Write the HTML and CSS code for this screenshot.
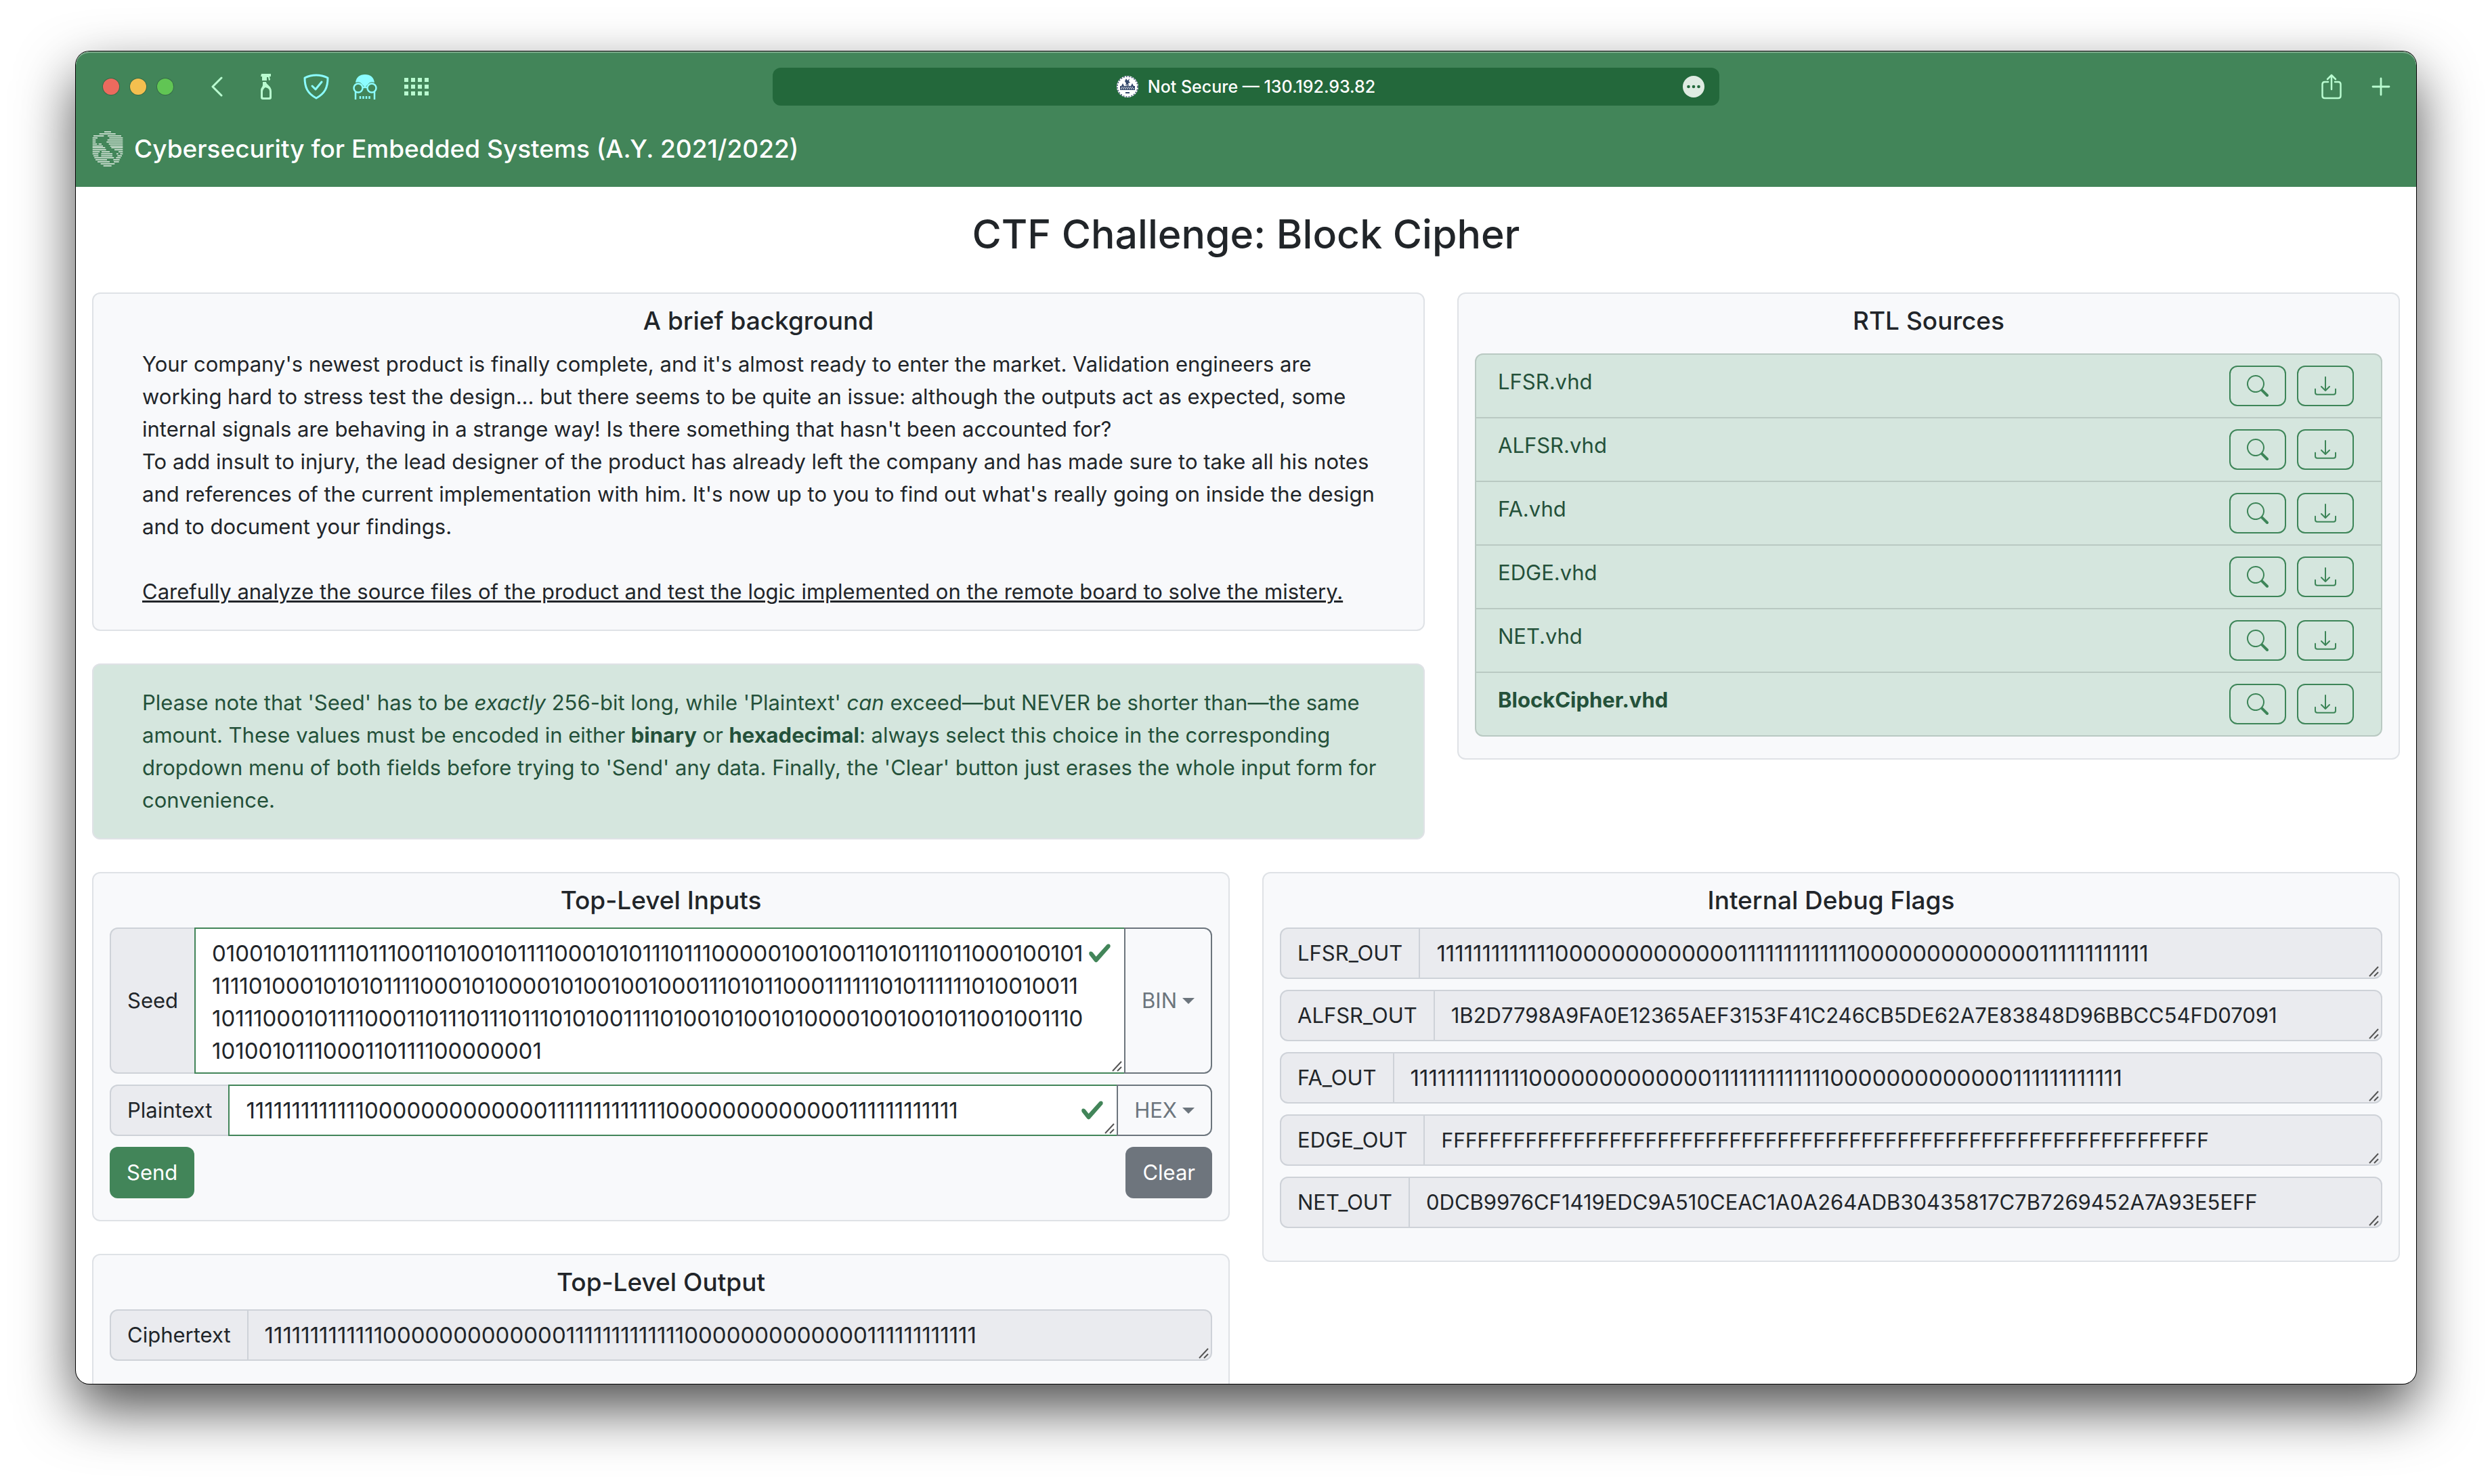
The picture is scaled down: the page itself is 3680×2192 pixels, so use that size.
FILE: index.html
```html
<!DOCTYPE html>
<html lang="en">
<head>
<meta charset="utf-8">
<title>CTF Challenge: Block Cipher</title>
<link rel="stylesheet" href="styles.css">
</head>
<body>
<svg class="sprite" aria-hidden="true">
  <symbol id="search" viewBox="0 0 16 16"><path d="M11.742 10.344a6.5 6.5 0 1 0-1.397 1.398h-.001c.03.04.062.078.098.115l3.85 3.85a1 1 0 0 0 1.415-1.414l-3.85-3.85a1.007 1.007 0 0 0-.115-.1zM12 6.5a5.5 5.5 0 1 1-11 0 5.5 5.5 0 0 1 11 0z"/></symbol>
  <symbol id="download" viewBox="0 0 16 16"><path d="M.5 9.900a.5.5 0 0 1 .5.5v2.500a1 1 0 0 0 1 1h12a1 1 0 0 0 1-1v-2.500a.5.5 0 0 1 1 0v2.500a2 2 0 0 1-2 2H2a2 2 0 0 1-2-2v-2.500a.5.5 0 0 1 .5-.5z"/><path d="M7.646 11.854a.5.5 0 0 0 .708 0l3-3a.5.5 0 0 0-.708-.708L8.500 10.293V1.500a.5.5 0 0 0-1 0v8.793L5.354 8.146a.5.5 0 1 0-.708.708l3 3z"/></symbol>
</svg>
<div class="window">
  <header class="chrome">
    <div class="toolbar">
      <div class="tools">
        <div class="lights"><span class="light red"></span><span class="light yellow"></span><span class="light green"></span></div>
        <button class="tool back" type="button" aria-label="Back"><svg width="18" height="30" viewBox="0 0 18 30" fill="none" stroke="currentColor" stroke-width="3" stroke-linecap="round" stroke-linejoin="round"><path d="M15 2 2 15l13 13"/></svg></button>
        <button class="tool spray" type="button" aria-label="Cleaner"><svg width="18" height="38" viewBox="0 0 18 38" fill="currentColor"><path d="M2 0h14v4h-2l1 5-2 1-1-5-2 0v2H3V4H1z"/><path d="M3 7h7v3H3z"/><path fill-rule="evenodd" d="M4 12h5c0 4 8 6 8 14v9q0 3-3 3H4q-3 0-3-3V25c0-5 3-5 3-9zM8 20c-3 2-4 4-4 7v7q0 1 1 1h8q1 0 1-1v-8c0-4-3-5-6-6z"/></svg></button>
        <button class="tool shield" type="button" aria-label="Privacy shield"><svg width="38" height="38" viewBox="0 0 38 38" fill="none" stroke="currentColor" stroke-width="3" stroke-linecap="round" stroke-linejoin="round"><path d="M19 2c6 0 11 1 17 4 0 14-4 23-17 30C6 29 2 20 2 6 8 3 13 2 19 2z"/><path d="m13 18 5 5 9-11"/></svg></button>
        <button class="tool agent" type="button" aria-label="Private mode"><svg width="36" height="38" viewBox="0 0 36 38" fill="none" stroke="currentColor" stroke-width="2.500"><path d="M4 13C5 5 10 1 18 1s13 4 14 12c-5-2-8 0-10 3l-4 4-4-4c-2-3-5-5-10-3z" fill="currentColor" stroke="none"/><circle cx="8" cy="21" r="6.500"/><circle cx="28" cy="21" r="6.500"/><path d="M14 20h8M4 27v11M32 27v11"/><path d="M11 33v4M15.500 33v4M20 33v4M24.500 33v4"/></svg></button>
        <button class="tool apps" type="button" aria-label="Top sites"><svg width="38" height="28" viewBox="0 0 38 28" fill="none" stroke="currentColor" stroke-width="6" stroke-dasharray="6 4"><path d="M1 4h36M1 14h36M1 24h36"/></svg></button>
      </div>
      <div class="address">
        <svg width="32" height="32" viewBox="0 0 32 32"><circle cx="16" cy="16" r="16" fill="#fff"/><circle cx="16" cy="16" r="15" fill="none" stroke="#34486c" stroke-width="1.500" stroke-dasharray="2 2"/><path d="M5 15h2l2-4 2 4h2l3-1 3 1h2l2-4 2 4h2v6H5z" fill="#34486c"/><path d="m14 4 2 3 3-3-1 4 2 2-3 1 1 3-3-1-2 1 1-3-2-3z" fill="#34486c"/><path d="M7 17h18M6 19h20" stroke="#fff" stroke-dasharray="2 1"/><path d="M13 25h6" stroke="#34486c" stroke-width="2"/></svg>
        <span>Not Secure — 130.192.93.82</span>
        <button class="more" type="button" aria-label="Page settings"><svg width="32" height="32" viewBox="0 0 32 32"><circle cx="16" cy="16" r="16" fill="#dfebe2"/><g fill="#23683b"><circle cx="8.500" cy="16" r="2.300"/><circle cx="16" cy="16" r="2.300"/><circle cx="23.500" cy="16" r="2.300"/></g></svg></button>
      </div>
      <div class="actions">
        <button class="tool" type="button" aria-label="Share"><svg width="30" height="38" viewBox="0 0 30 38" fill="none" stroke="currentColor" stroke-width="2.500" stroke-linecap="round" stroke-linejoin="round"><path d="M10 12H5q-3.500 0-3.500 3.500v17Q1.500 36 5 36h20q3.500 0 3.500-3.500v-17Q28.500 12 25 12h-5M15 23V2M9 8l6-6 6 6"/></svg></button>
        <button class="tool" type="button" aria-label="New tab"><svg width="28" height="28" viewBox="0 0 28 28" fill="none" stroke="currentColor" stroke-width="2.800" stroke-linecap="round"><path d="M14 2v24M2 14h24"/></svg></button>
      </div>
    </div>
    <a class="brand" href="#">
      <svg width="46" height="54" viewBox="28 28 138 160" fill="none" stroke="#e6f0e8" stroke-width="4.500"><path d="M82 32h30M60 41h72M34 50h46M97 50h60M30 59h22M104 59h60M30 68h14M96 68h68M30 77h14M92 77h72M30 86h20M57 86h13M102 86h62M30 95h46M108 95h56M30 103h56M113 103h51M30 112h60M127 112h37M30 121h32M70 121h36M145 121h19M30 130h26M68 130h50M136 130h8M152 130h12M34 139h22M68 139h50M140 139h20M38 147h87M134 147h21M43 156h51M122 156h28M52 165h54M124 165h23M66 174h62M78 183h36"/></svg>
      Cybersecurity for Embedded Systems (A.Y. 2021/2022)
    </a>
  </header>
  <main>
    <h1>CTF Challenge: Block Cipher</h1>
    <div class="grid">
      <div class="stack wide">
        <section class="card">
          <h2>A brief background</h2>
          <p>Your company's newest product is finally complete, and it's almost ready to enter the market. Validation engineers are working hard to stress test the design... but there seems to be quite an issue: although the outputs act as expected, some internal signals are behaving in a strange way! Is there something that hasn't been accounted for?<br>To add insult to injury, the lead designer of the product has already left the company and has made sure to take all his notes and references of the current implementation with him. It's now up to you to find out what's really going on inside the design and to document your findings.<br><br><u>Carefully analyze the source files of the product and test the logic implemented on the remote board to solve the mistery.</u></p>
        </section>
        <section class="card note">
          <p>Please note that 'Seed' has to be <em>exactly</em> 256-bit long, while 'Plaintext' <em>can</em> exceed—but NEVER be shorter than—the same amount. These values must be encoded in either <strong>binary</strong> or <strong>hexadecimal</strong>: always select this choice in the corresponding dropdown menu of both fields before trying to 'Send' any data. Finally, the 'Clear' button just erases the whole input form for convenience.</p>
        </section>
      </div>
      <div class="stack narrow">
        <section class="card">
          <h2>RTL Sources</h2>
          <ul class="sources">
            <li><span>LFSR.vhd</span><button type="button" aria-label="View LFSR.vhd"><svg><use href="#search"/></svg></button><button type="button" aria-label="Download LFSR.vhd"><svg><use href="#download"/></svg></button></li>
            <li><span>ALFSR.vhd</span><button type="button" aria-label="View ALFSR.vhd"><svg><use href="#search"/></svg></button><button type="button" aria-label="Download ALFSR.vhd"><svg><use href="#download"/></svg></button></li>
            <li><span>FA.vhd</span><button type="button" aria-label="View FA.vhd"><svg><use href="#search"/></svg></button><button type="button" aria-label="Download FA.vhd"><svg><use href="#download"/></svg></button></li>
            <li><span>EDGE.vhd</span><button type="button" aria-label="View EDGE.vhd"><svg><use href="#search"/></svg></button><button type="button" aria-label="Download EDGE.vhd"><svg><use href="#download"/></svg></button></li>
            <li><span>NET.vhd</span><button type="button" aria-label="View NET.vhd"><svg><use href="#search"/></svg></button><button type="button" aria-label="Download NET.vhd"><svg><use href="#download"/></svg></button></li>
            <li><span><strong>BlockCipher.vhd</strong></span><button type="button" aria-label="View BlockCipher.vhd"><svg><use href="#search"/></svg></button><button type="button" aria-label="Download BlockCipher.vhd"><svg><use href="#download"/></svg></button></li>
          </ul>
        </section>
      </div>
      <div class="stack half">
        <form class="card">
          <h2>Top-Level Inputs</h2>
          <div class="group">
            <label for="seed">Seed</label>
            <textarea id="seed" class="digits valid seed" rows="4" spellcheck="false">0100101011111011100110100101111000101011101110000010010011010111011000100101
1111010001010101111000101000010100100100011101011000111111010111111010010011
1011100010111100011011101110111010100111101001010010100001001001011001001110
1010010111000110111100000001</textarea>
            <select aria-label="Seed encoding"><option>BIN</option><option>HEX</option></select>
          </div>
          <div class="group">
            <label for="plaintext">Plaintext</label>
            <textarea id="plaintext" class="digits valid" rows="1" spellcheck="false">1111111111111000000000000011111111111110000000000000111111111111</textarea>
            <select aria-label="Plaintext encoding"><option>HEX</option><option>BIN</option></select>
          </div>
          <div class="buttons">
            <button class="btn send" type="button">Send</button>
            <button class="btn clear" type="reset">Clear</button>
          </div>
        </form>
        <section class="card">
          <h2>Top-Level Output</h2>
          <div class="group">
            <label for="ciphertext">Ciphertext</label>
            <textarea id="ciphertext" class="digits" rows="1" readonly>1111111111111000000000000011111111111110000000000000111111111111</textarea>
          </div>
        </section>
      </div>
      <div class="stack half">
        <section class="card">
          <h2>Internal Debug Flags</h2>
          <div class="group"><label for="lfsr">LFSR_OUT</label><textarea id="lfsr" class="digits" rows="1" readonly>1111111111111000000000000011111111111110000000000000111111111111</textarea></div>
          <div class="group"><label for="alfsr">ALFSR_OUT</label><textarea id="alfsr" rows="1" readonly>1B2D7798A9FA0E12365AEF3153F41C246CB5DE62A7E83848D96BBCC54FD07091</textarea></div>
          <div class="group"><label for="fa">FA_OUT</label><textarea id="fa" class="digits" rows="1" readonly>1111111111111000000000000011111111111110000000000000111111111111</textarea></div>
          <div class="group"><label for="edge">EDGE_OUT</label><textarea id="edge" class="letters" rows="1" readonly>FFFFFFFFFFFFFFFFFFFFFFFFFFFFFFFFFFFFFFFFFFFFFFFFFFFFFFFFFFFFFFFF</textarea></div>
          <div class="group"><label for="net">NET_OUT</label><textarea id="net" rows="1" readonly>0DCB9976CF1419EDC9A510CEAC1A0A264ADB30435817C7B7269452A7A93E5EFF</textarea></div>
        </section>
      </div>
    </div>
  </main>
</div>
</body>
</html>
```
FILE: styles.css
```css
* { box-sizing: border-box; }

body {
  display: flex;
  height: 100vh;
  margin: 0;
  padding: 76px 112px 148px;
  background: #fff;
  color: #212529;
  font: 400 31px/48px Inter, "Liberation Sans", sans-serif;
}

button, select, textarea { margin: 0; font: inherit; }
h1, h2, p, ul { margin: 0; }

.sprite { position: absolute; width: 0; height: 0; }

.window {
  flex: 1;
  min-width: 0;
  overflow: hidden;
  border-radius: 20px;
  background: #fff;
  box-shadow: 0 0 0 1px #000, 0 36px 84px rgba(0, 0, 0, .7);
}

/* Browser chrome */
.chrome {
  border-radius: 20px 20px 0 0;
  background: #428559;
  box-shadow: inset 0 2px 1px #82ae90;
}

.toolbar {
  display: grid;
  grid-template-columns: 1fr minmax(0, 1398px) 1fr;
  align-items: center;
  height: 104px;
  padding: 0 38px;
}

.tools, .actions { display: flex; align-items: center; }
.actions { justify-content: flex-end; gap: 44px; }

.lights { display: flex; gap: 16px; margin: 0 56px 0 2px; }
.light { width: 24px; height: 24px; border-radius: 50%; box-shadow: 0 0 0 1px rgba(0, 0, 0, .2); }
.red { background: #ec6a5e; }
.yellow { background: #f4bf4f; }
.green { background: #61c554; }

.tool { display: flex; padding: 0; border: 0; background: none; color: #b9fbd0; }
.spray { margin-left: 54px; }
.shield { margin-left: 46px; color: #8cfcff; }
.agent { margin-left: 35px; color: #8cfcff; }
.apps { margin-left: 39px; }

.address {
  display: flex;
  justify-content: center;
  align-items: center;
  gap: 14px;
  position: relative;
  height: 56px;
  border-radius: 12px;
  background: #23683b;
  color: #fff;
  font-size: 25px;
  font-weight: 500;
}
.more { display: flex; position: absolute; right: 22px; padding: 0; border: 0; background: none; }

.brand {
  display: flex;
  align-items: center;
  gap: 16px;
  height: 96px;
  padding: 0 24px 16px;
  color: #fff;
  font-size: 37px;
  font-weight: 500;
  text-decoration: none;
}

/* Page */
main { padding: 32px 24px; }

h1 {
  margin-bottom: 48px;
  font-size: 59px;
  font-weight: 500;
  line-height: 76px;
  text-align: center;
}

h2 {
  margin-bottom: 16px;
  font-size: 37px;
  font-weight: 500;
  line-height: 48px;
  text-align: center;
}

.grid {
  display: grid;
  grid-template-columns: repeat(12, minmax(0, 1fr));
  gap: 48px;
  align-items: start;
}
.stack { display: grid; grid-template-columns: minmax(0, 1fr); gap: 48px; }
.wide { grid-column: span 7; }
.narrow { grid-column: span 5; }
.half { grid-column: span 6; }

.card {
  padding: 16px 24px 32px;
  border: 2px solid #dfe2e6;
  border-radius: 12px;
  background: #f8f9fb;
}
.card p { padding: 0 24px 0 48px; }
.note { padding-top: 32px; background: #d5e6de; color: #24513a; }

.sources {
  margin-top: 24px;
  padding: 0;
  border: 2px solid #b9c9c2;
  border-radius: 12px;
  background: #d5e6de;
  color: #24513a;
  list-style: none;
}
.sources li { display: flex; gap: 16px; padding: 16px 40px 16px 32px; }
.sources li + li { border-top: 2px solid #b9c9c2; }
.sources span { flex: 1; }
.sources button {
  display: grid;
  place-items: center;
  width: 84px;
  height: 60px;
  padding: 0;
  border: 2px solid #3d8558;
  border-radius: 12px;
  background: none;
}
.sources svg { width: 32px; height: 32px; fill: #3d8558; }

/* Forms */
.group { display: flex; margin-bottom: 16px; }

label {
  display: flex;
  align-items: center;
  padding: 0 24px;
  border: 2px solid #ced2d8;
  border-radius: 12px 0 0 12px;
  background: #eaebef;
}

textarea {
  flex: 1;
  min-width: 0;
  height: 76px;
  margin-left: -2px;
  padding: 12px 24px;
  overflow: hidden;
  border: 2px solid #ced2d8;
  border-radius: 0 12px 12px 0;
  outline: 0;
  background: #eaebef url("data:image/svg+xml,%3Csvg xmlns='http://www.w3.org/2000/svg' width='16' height='16' stroke='%23555' stroke-width='2'%3E%3Cpath d='M1 15 14 1M8 15l6-6'/%3E%3C/svg%3E") no-repeat right 2px bottom 1px;
  color: inherit;
  resize: none;
  white-space: pre;
}
.digits { font-size: 33px; }
.letters { font-size: 30px; }

.valid {
  padding-right: 54px;
  border-color: #428559;
  border-radius: 0;
  background-color: #fff;
  background-image: url("data:image/svg+xml,%3Csvg xmlns='http://www.w3.org/2000/svg' width='16' height='16' stroke='%23555' stroke-width='2'%3E%3Cpath d='M1 15 14 1M8 15l6-6'/%3E%3C/svg%3E"), url("data:image/svg+xml,%3Csvg xmlns='http://www.w3.org/2000/svg' viewBox='0 0 8 8'%3E%3Cpath fill='%23428559' d='M2.300 6.730.6 4.530c-.4-1.040.46-1.400 1.100-.8l1.100 1.400 3.400-3.800c.6-.63 1.600-.27 1.200.7l-4 4.600c-.43.5-.8.4-1.100.1z'/%3E%3C/svg%3E");
  background-position: right 2px bottom 1px, right 18px top 18px;
  background-size: 16px, 36px;
}
.seed { height: 216px; }

select {
  appearance: none;
  margin-left: -2px;
  padding: 0 50px 0 24px;
  border: 2px solid #6c757d;
  border-radius: 0 12px 12px 0;
  background: #f8f9fb url("data:image/svg+xml,%3Csvg xmlns='http://www.w3.org/2000/svg' width='18' height='9' fill='%236c757d'%3E%3Cpath d='M0 0h18L9 9z'/%3E%3C/svg%3E") no-repeat right 24px center;
  color: #6c757d;
  field-sizing: content;
}

.buttons { display: flex; justify-content: space-between; }
.btn { height: 76px; padding: 0 25px; border: 0; border-radius: 12px; color: #fff; }
.send { background: #428559; }
.clear { background: #6e757d; }
```
